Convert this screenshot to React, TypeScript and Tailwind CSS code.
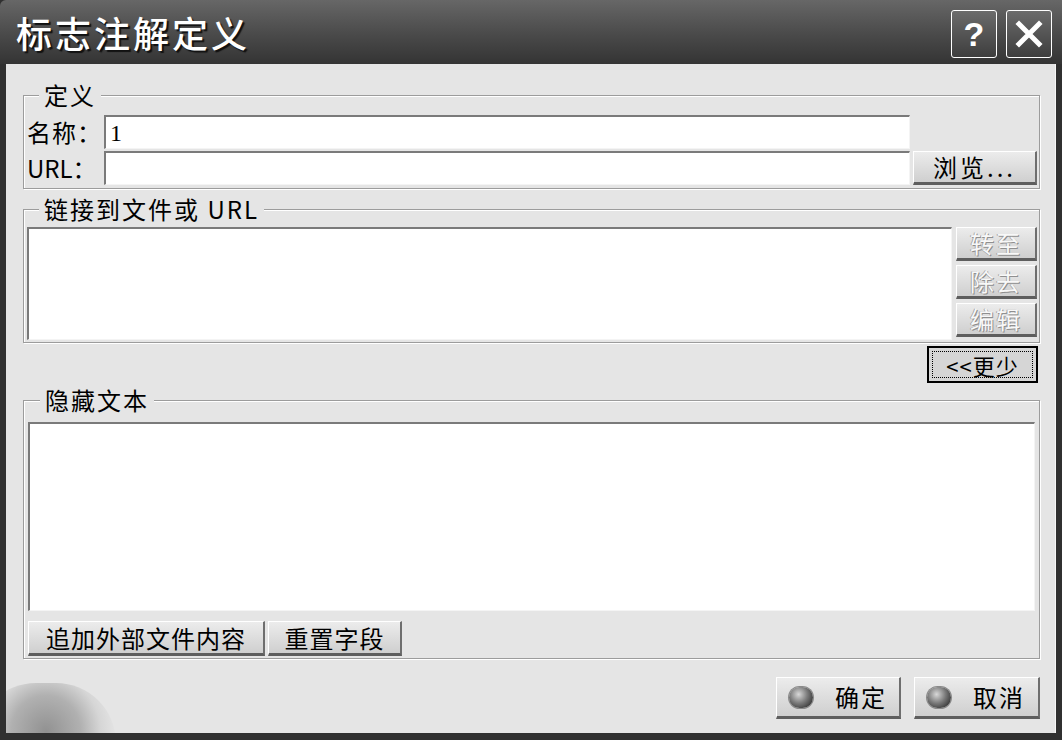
import React from 'react'

const cjk = "font-['Noto_Sans_CJK_SC','Noto_Sans',sans-serif]"

// raised grey push button (no text colour here)
const raised =
  'flex items-center justify-center bg-gradient-to-b from-[#ececec] to-[#cfcfcf] border-t border-l border-t-white border-l-white border-r-2 border-b-[3px] border-r-[#6e6e6e] border-b-[#5e5e5e] text-[24px] leading-none'

// sunken white edit field
const sunken = 'bg-white border-t-2 border-l-2 border-t-[#7a7a7a] border-l-[#7a7a7a] border-b border-r border-b-[#f4f4f4] border-r-[#f4f4f4]'

function Group({ title, className, children }: { title: string; className?: string; children: React.ReactNode }) {
  return (
    <fieldset
      className={`border border-[#9c9c9c] shadow-[inset_1px_1px_0_#fff,1px_1px_0_#fff] ${className ?? ''}`}
    >
      <legend className="ml-[12px] px-[5px] bg-[#e5e5e5] text-[24px] leading-[26px] tracking-[2px] text-black">
        {title}
      </legend>
      {children}
    </fieldset>
  )
}

function Bubble() {
  return (
    <span className="w-[24px] h-[21px] rounded-full bg-[radial-gradient(circle_at_40%_35%,#d8d8d8,#7a7a7a_45%,#3a3a3a_80%)] shadow-[0_0_0_1px_#8a8a8a]" />
  )
}

function DisabledBtn({ label }: { label: string }) {
  return (
    <div className={`${raised} h-[34px] text-[#f8f8f8] [text-shadow:1px_1px_0_#8f8f8f,-1px_0_0_#a8a8a8]`}>
      {label}
    </div>
  )
}

export default function App() {
  return (
    <div className={`w-[1062px] h-[740px] bg-[#303030] flex flex-col ${cjk}`}>
      {/* 标题栏 */}
      <div className="h-[64px] flex items-center pl-[16px] pr-[10px] bg-gradient-to-b from-[#676767] via-[#4c4c4c] to-[#343434] rounded-tl-[6px]">
        <span className="flex-1 text-white text-[36px] leading-none tracking-[3px] font-medium [text-shadow:2px_2px_1px_#111]">
          标志注解定义
        </span>
        <div className="flex gap-[9px] pt-[4px]">
          <div className="w-[46px] h-[48px] flex items-center justify-center rounded-[3px] border border-white bg-gradient-to-b from-[#6c6c6c] to-[#3e3e3e] text-white text-[34px] font-bold font-['Liberation_Sans',sans-serif] leading-none">
            ?
          </div>
          <div className="w-[46px] h-[48px] flex items-center justify-center rounded-[3px] border border-white bg-gradient-to-b from-[#6c6c6c] to-[#3e3e3e]">
            <svg width="30" height="30" viewBox="0 0 30 30">
              <path d="M5 5 L25 25 M25 5 L5 25" stroke="#fff" strokeWidth="5" strokeLinecap="square" />
            </svg>
          </div>
        </div>
      </div>

      {/* 主体 */}
      <div className="relative h-[669px] ml-[6px] mr-[6px] bg-[#e5e5e5] border-r border-r-[#f6f6f6] flex flex-col pl-[17px] pr-[15px] overflow-hidden text-black">
        {/* 左下角装饰 */}
        <div className="absolute left-[-30px] bottom-[-70px] w-[140px] h-[120px] rounded-full bg-[radial-gradient(ellipse_at_50%_40%,#6e6e6e_0%,#9a9a9a_35%,#cfcfcf_55%,transparent_72%)] opacity-70" />

        {/* 定义 */}
        <Group title="定义" className="mt-[18px] pl-[3px] pr-[2px] pt-[7px] pb-[3px]">
          <div className="grid grid-cols-[77px_806px_1fr] gap-y-[2px] text-[24px] leading-none">
            <span className="self-center tracking-[1px]">名称：</span>
            <div className={`${sunken} h-[34px] flex items-center pl-[4px] font-['Liberation_Serif',serif] text-[24px]`}>1</div>
            <span />
            <span className="self-center">URL：</span>
            <div className={`${sunken} h-[34px]`} />
            <div className={`${raised} ml-[3px] h-[34px] tracking-[3px]`}>浏览...</div>
          </div>
        </Group>

        {/* 链接到文件或 URL */}
        <Group title="链接到文件或 URL" className="mt-[7px] pl-[3px] pr-[2px] pt-[5px] pb-[2px]">
          <div className="flex gap-[4px]">
            <div className={`${sunken} flex-1 h-[113px]`} />
            <div className="w-[81px] flex flex-col gap-[4px] tracking-[2px]">
              <DisabledBtn label="转至" />
              <DisabledBtn label="除去" />
              <DisabledBtn label="编辑" />
            </div>
          </div>
        </Group>

        <div className="mt-[3px] flex justify-end pr-[2px]">
          <div className="w-[111px] h-[37px] border-2 border-black bg-[#d6d6d6] p-[3px]">
            <div className="w-full h-full border border-dotted border-black flex items-center justify-center text-[22px] leading-none tracking-[1px]">
              &lt;&lt;更少
            </div>
          </div>
        </div>

        {/* 隐藏文本 */}
        <Group title="隐藏文本" className="mt-[4px] pl-[4px] pr-[4px] pt-[9px] pb-[2px]">
          <div className={`${sunken} h-[189px]`} />
          <div className="mt-[10px] flex gap-[3px] tracking-[1px]">
            <div className={`${raised} w-[237px] h-[35px]`}>追加外部文件内容</div>
            <div className={`${raised} w-[134px] h-[35px]`}>重置字段</div>
          </div>
        </Group>

        {/* 确定 / 取消 */}
        <div className="relative mt-[18px] flex justify-end gap-[13px]">
          <div className={`${raised} w-[125px] h-[42px] justify-start pl-[12px] gap-[22px] tracking-[2px]`}>
            <Bubble />
            <span>确定</span>
          </div>
          <div className={`${raised} w-[126px] h-[42px] justify-start pl-[12px] gap-[22px] tracking-[2px]`}>
            <Bubble />
            <span>取消</span>
          </div>
        </div>
      </div>
    </div>
  )
}
